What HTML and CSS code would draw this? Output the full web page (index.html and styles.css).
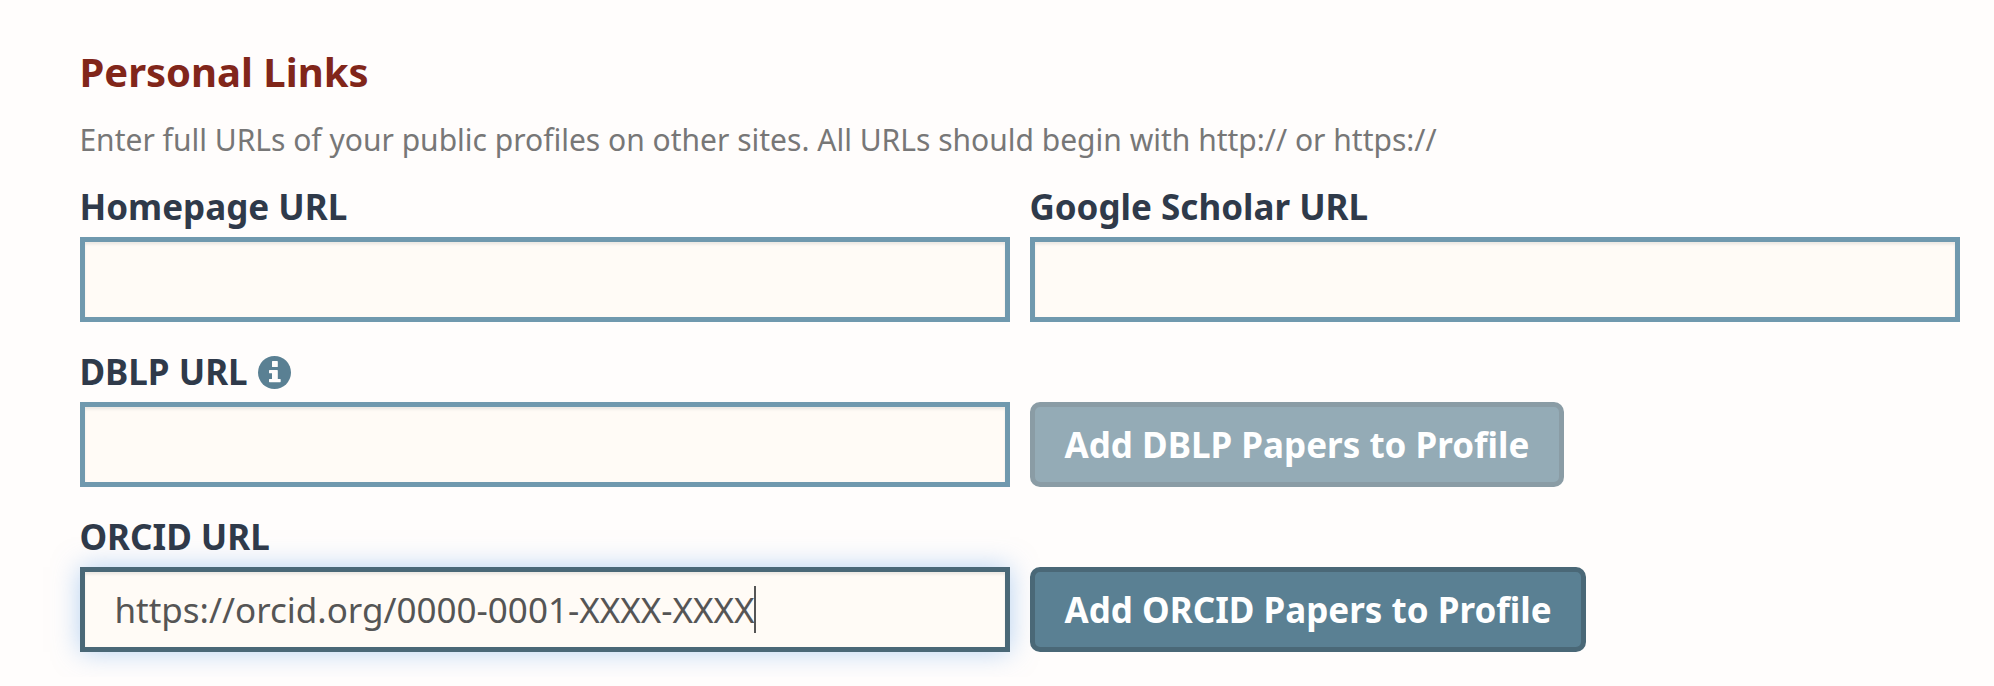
FILE: index.html
```html
<!DOCTYPE html>
<html lang="en">
<head>
<meta charset="utf-8">
<title>Personal Links</title>
<link rel="stylesheet" href="styles.css">
</head>
<body>
<section class="links">
  <h4 class="title">Personal Links</h4>
  <p class="instructions">Enter full URLs of your public profiles on other sites. All URLs should begin with http:// or https://</p>
  <div class="row">
    <div class="field">
      <div class="label">Homepage URL</div>
      <div class="control"></div>
    </div>
    <div class="field">
      <div class="label">Google Scholar URL</div>
      <div class="control"></div>
    </div>
  </div>
  <div class="row">
    <div class="field">
      <div class="label">DBLP URL
        <svg class="info" viewBox="0 0 33 33" aria-hidden="true">
          <circle class="info-disc" cx="16.5" cy="16.5" r="16.5"/>
          <path class="info-mark" d="M14.6 5.1h4.6q.6 0 .6.6v4.7q0 .6-.6.6h-4.6q-.6 0-.6-.6V5.700q0-.6.6-.6zM11.600 14.100h7.600q.6 0 .6.6v8.200h2.300q.6 0 .6.6v2.100q0 .6-.6.6H11.600q-.6 0-.6-.6v-2.100q0-.6.6-.6H14v-5.600h-2.400q-.6 0-.6-.6v-2q0-.6.6-.6z"/>
        </svg>
      </div>
      <div class="control"></div>
    </div>
    <button class="btn" type="button" disabled>Add DBLP Papers to Profile</button>
  </div>
  <div class="row">
    <div class="field">
      <div class="label">ORCID URL</div>
      <div class="control focused"><span class="value">https://orcid.org/0000-0001-XXXX-XXXX</span><span class="caret"></span></div>
    </div>
    <button class="btn" type="button">Add ORCID Papers to Profile</button>
  </div>
</section>
</body>
</html>
```

FILE: styles.css
```css
* { box-sizing: border-box; }
body {
  margin: 0;
  background: #fffdfc;
  font-family: "Noto Sans", sans-serif;
}
.links { padding: 50px 34px 0 80px; }
.title {
  margin: 0 0 25px;
  font-size: 40px;
  line-height: 44px;
  font-weight: 700;
  text-indent: -0.6px;
  color: #81261a;
}
.instructions {
  margin: 0 0 21px;
  font-size: 30px;
  line-height: 42px;
  text-indent: -0.6px;
  color: #777;
}
.row {
  display: grid;
  grid-template-columns: 930px 930px;
  column-gap: 20px;
  height: 140px;
  margin-bottom: 25px;
}
.label {
  display: flex;
  align-items: center;
  gap: 10.4px;
  height: 50px;
  margin-bottom: 5px;
  font-size: 35px;
  line-height: 50px;
  font-weight: 700;
  text-indent: -0.6px;
  color: #2f3a4a;
}
.info { width: 33px; height: 33px; margin-top: 1px; }
.info-disc { fill: #5a8093; }
.info-mark { fill: #fffdfc; }
.control {
  display: flex;
  align-items: center;
  height: 85px;
  padding: 0 29.4px;
  border: 5px solid #7099ae;
  background: #fffbf6;
  box-shadow: inset 0 2.5px 2.5px rgba(0, 0, 0, .075);
  font-size: 35px;
  line-height: 50px;
  color: #555;
}
.focused {
  border-color: #4a6877;
  box-shadow: inset 0 2.5px 2.5px rgba(0, 0, 0, .075), 0 0 25px rgba(110, 170, 235, .5);
}
.caret { width: 2px; height: 47px; margin-left: -1px; background: #555; }
.btn {
  align-self: end;
  justify-self: start;
  height: 85px;
  padding: 0 29.8px 0 29.5px;
  border: 5px solid #4a6877;
  border-radius: 10px;
  background: #5a8093;
  font: 700 35px/50px "Noto Sans", sans-serif;
  white-space: nowrap;
  color: #fff;
}
.btn:disabled { background: #94abb6; border-color: #8a9ca5; }
```
